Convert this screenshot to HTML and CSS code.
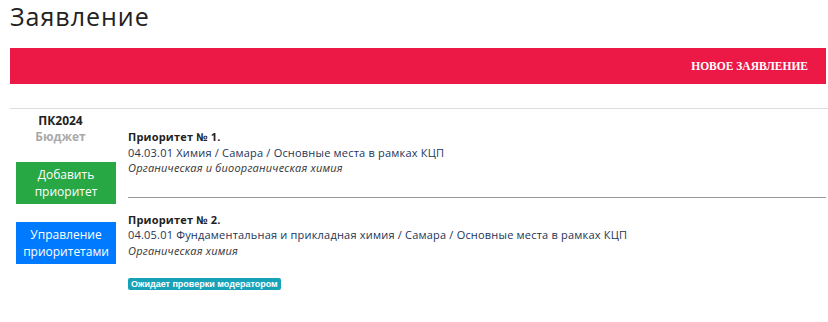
FILE: index.html
```html
<!DOCTYPE html>
<html lang="ru">
<head>
    <meta charset="UTF-8">
    <title>Заявление</title>
    <link rel="stylesheet" href="styles.css">
</head>
<body>
    <div class="page">
        <h2 class="page-title">Заявление</h2>

        <!-- панель с кнопкой нового заявления -->
        <div class="red-bar">
            <a href="#" class="new-link">Новое заявление</a>
        </div>

        <div class="app-row">
            <div class="app-side">
                <div class="campaign">ПК2024</div>
                <div class="source">Бюджет</div>
                <a href="#" class="btn btn-green">Добавить приоритет</a>
                <a href="#" class="btn btn-blue">Управление приоритетами</a>
            </div>

            <div class="app-main">
                <div class="priority">
                    <div class="priority-title">Приоритет № 1.</div>
                    <div class="priority-spec">04.03.01 Химия / Самара / Основные места в рамках КЦП</div>
                    <div class="priority-prof">Органическая и биоорганическая химия</div>
                </div>
                <div class="priority last">
                    <div class="priority-title">Приоритет № 2.</div>
                    <div class="priority-spec">04.05.01 Фундаментальная и прикладная химия / Самара / Основные места в рамках КЦП</div>
                    <div class="priority-prof">Органическая химия</div>
                    <span class="badge">Ожидает проверки модератором</span>
                </div>
            </div>
        </div>
    </div>
</body>
</html>
```

FILE: styles.css
```css
* {
    margin: 0;
    padding: 0;
    box-sizing: border-box;
}

body {
    font-family: 'Open Sans', sans-serif;
    color: #212529;
    background: #fff;
}

.page {
    padding-left: 10px;
}

.page-title {
    font-size: 25px;
    font-weight: 500;
    line-height: 32px;
    letter-spacing: 1px;
    color: #222;
    margin-bottom: 16px;
}

.red-bar {
    height: 36px;
    width: 816px;
    background: #ec1846;
    display: flex;
    align-items: center;
    justify-content: flex-end;
    padding-right: 18px;
}

.new-link {
    font-family: 'Liberation Serif', serif;
    font-size: 11.5px;
    font-weight: 700;
    color: #fff;
    text-decoration: none;
    text-transform: uppercase;
}

.app-row {
    display: flex;
    margin-top: 24px;
    border-top: 1px solid #ddd;
}

.app-side {
    width: 112px;
    display: flex;
    flex-direction: column;
    align-items: center;
    padding-top: 4px;
}

.campaign,
.source {
    font-size: 12px;
    font-weight: 700;
    line-height: 16px;
    padding-right: 11px;
}

.campaign {
    color: #222;
}

.source {
    color: #aaa;
    margin-bottom: 17px;
}

.btn {
    display: block;
    width: 100px;
    padding: 4px;
    color: #fff;
    font-size: 12px;
    line-height: 17px;
    text-align: center;
    text-decoration: none;
}

.btn-green {
    background: #28a745;
    margin-bottom: 18px;
}

.btn-blue {
    background: #007bff;
}

.app-main {
    flex: 1;
    padding-left: 6px;
    padding-right: 2px;
}

.priority {
    padding: 20px 0 21px;
    border-bottom: 1px solid #999;
    font-size: 11px;
    line-height: 15.5px;
    letter-spacing: 0.2px;
}

.priority.last {
    border-bottom: none;
    padding-top: 14px;
}

.priority-title {
    font-weight: 700;
    color: #222;
}

.priority-spec {
    color: #1d3557;
}

.priority-prof {
    font-style: italic;
    color: #333;
}

.badge {
    display: inline-block;
    margin-top: 20px;
    background: #17a2b8;
    color: #fff;
    font-family: 'Liberation Sans', sans-serif;
    font-weight: 700;
    font-size: 9px;
    line-height: 12px;
    letter-spacing: 0;
    padding: 0 3px;
    border-radius: 2px;
}
```
